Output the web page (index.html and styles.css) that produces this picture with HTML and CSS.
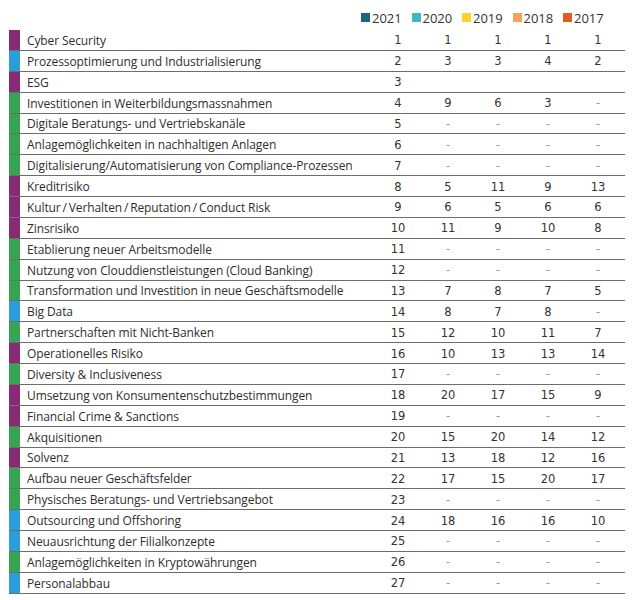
FILE: index.html
```html
<!DOCTYPE html>
<html lang="de">
<head>
<meta charset="utf-8">
<link rel="stylesheet" href="styles.css">
</head>
<body>
<div class="page">
  <div class="legend">
    <span class="key"><i class="sw c2021"></i>2021</span>
    <span class="key"><i class="sw c2020"></i>2020</span>
    <span class="key"><i class="sw c2019"></i>2019</span>
    <span class="key"><i class="sw c2018"></i>2018</span>
    <span class="key"><i class="sw c2017"></i>2017</span>
  </div>
  <div class="table">
    <div class="row p"><i class="bar"></i><span class="label">Cyber Security</span><span class="n">1</span><span class="n">1</span><span class="n">1</span><span class="n">1</span><span class="n">1</span></div>
    <div class="row b"><i class="bar"></i><span class="label">Prozessoptimierung und Industrialisierung</span><span class="n">2</span><span class="n">3</span><span class="n">3</span><span class="n">4</span><span class="n">2</span></div>
    <div class="row p"><i class="bar"></i><span class="label">ESG</span><span class="n">3</span><span class="n"></span><span class="n"></span><span class="n"></span><span class="n"></span></div>
    <div class="row g"><i class="bar"></i><span class="label">Investitionen in Weiterbildungsmassnahmen</span><span class="n">4</span><span class="n">9</span><span class="n">6</span><span class="n">3</span><span class="n d">-</span></div>
    <div class="row g"><i class="bar"></i><span class="label">Digitale Beratungs- und Vertriebskanäle</span><span class="n">5</span><span class="n d">-</span><span class="n d">-</span><span class="n d">-</span><span class="n d">-</span></div>
    <div class="row g"><i class="bar"></i><span class="label">Anlagemöglichkeiten in nachhaltigen Anlagen</span><span class="n">6</span><span class="n d">-</span><span class="n d">-</span><span class="n d">-</span><span class="n d">-</span></div>
    <div class="row g"><i class="bar"></i><span class="label">Digitalisierung/Automatisierung von Compliance-Prozessen</span><span class="n">7</span><span class="n d">-</span><span class="n d">-</span><span class="n d">-</span><span class="n d">-</span></div>
    <div class="row p"><i class="bar"></i><span class="label">Kreditrisiko</span><span class="n">8</span><span class="n">5</span><span class="n">11</span><span class="n">9</span><span class="n">13</span></div>
    <div class="row p"><i class="bar"></i><span class="label">Kultur&#8201;/&#8201;Verhalten&#8201;/&#8201;Reputation&#8201;/&#8201;Conduct Risk</span><span class="n">9</span><span class="n">6</span><span class="n">5</span><span class="n">6</span><span class="n">6</span></div>
    <div class="row p"><i class="bar"></i><span class="label">Zinsrisiko</span><span class="n">10</span><span class="n">11</span><span class="n">9</span><span class="n">10</span><span class="n">8</span></div>
    <div class="row g"><i class="bar"></i><span class="label">Etablierung neuer Arbeitsmodelle</span><span class="n">11</span><span class="n d">-</span><span class="n d">-</span><span class="n d">-</span><span class="n d">-</span></div>
    <div class="row g"><i class="bar"></i><span class="label">Nutzung von Clouddienstleistungen (Cloud Banking)</span><span class="n">12</span><span class="n d">-</span><span class="n d">-</span><span class="n d">-</span><span class="n d">-</span></div>
    <div class="row g"><i class="bar"></i><span class="label">Transformation und Investition in neue Geschäftsmodelle</span><span class="n">13</span><span class="n">7</span><span class="n">8</span><span class="n">7</span><span class="n">5</span></div>
    <div class="row b"><i class="bar"></i><span class="label">Big Data</span><span class="n">14</span><span class="n">8</span><span class="n">7</span><span class="n">8</span><span class="n d">-</span></div>
    <div class="row g"><i class="bar"></i><span class="label">Partnerschaften mit Nicht-Banken</span><span class="n">15</span><span class="n">12</span><span class="n">10</span><span class="n">11</span><span class="n">7</span></div>
    <div class="row p"><i class="bar"></i><span class="label">Operationelles Risiko</span><span class="n">16</span><span class="n">10</span><span class="n">13</span><span class="n">13</span><span class="n">14</span></div>
    <div class="row g"><i class="bar"></i><span class="label">Diversity &amp; Inclusiveness</span><span class="n">17</span><span class="n d">-</span><span class="n d">-</span><span class="n d">-</span><span class="n d">-</span></div>
    <div class="row p"><i class="bar"></i><span class="label">Umsetzung von Konsumentenschutzbestimmungen</span><span class="n">18</span><span class="n">20</span><span class="n">17</span><span class="n">15</span><span class="n">9</span></div>
    <div class="row p"><i class="bar"></i><span class="label">Financial Crime &amp; Sanctions</span><span class="n">19</span><span class="n d">-</span><span class="n d">-</span><span class="n d">-</span><span class="n d">-</span></div>
    <div class="row g"><i class="bar"></i><span class="label">Akquisitionen</span><span class="n">20</span><span class="n">15</span><span class="n">20</span><span class="n">14</span><span class="n">12</span></div>
    <div class="row p"><i class="bar"></i><span class="label">Solvenz</span><span class="n">21</span><span class="n">13</span><span class="n">18</span><span class="n">12</span><span class="n">16</span></div>
    <div class="row g"><i class="bar"></i><span class="label">Aufbau neuer Geschäftsfelder</span><span class="n">22</span><span class="n">17</span><span class="n">15</span><span class="n">20</span><span class="n">17</span></div>
    <div class="row g"><i class="bar"></i><span class="label">Physisches Beratungs- und Vertriebsangebot</span><span class="n">23</span><span class="n d">-</span><span class="n d">-</span><span class="n d">-</span><span class="n d">-</span></div>
    <div class="row b"><i class="bar"></i><span class="label">Outsourcing und Offshoring</span><span class="n">24</span><span class="n">18</span><span class="n">16</span><span class="n">16</span><span class="n">10</span></div>
    <div class="row b"><i class="bar"></i><span class="label">Neuausrichtung der Filialkonzepte</span><span class="n">25</span><span class="n d">-</span><span class="n d">-</span><span class="n d">-</span><span class="n d">-</span></div>
    <div class="row g"><i class="bar"></i><span class="label">Anlagemöglichkeiten in Kryptowährungen</span><span class="n">26</span><span class="n d">-</span><span class="n d">-</span><span class="n d">-</span><span class="n d">-</span></div>
    <div class="row b"><i class="bar"></i><span class="label">Personalabbau</span><span class="n">27</span><span class="n d">-</span><span class="n d">-</span><span class="n d">-</span><span class="n d">-</span></div>
  </div>
</div>
</body>
</html>
```

FILE: styles.css
```css
* { box-sizing: border-box; }
html, body { margin: 0; padding: 0; background: #fff; }
body {
  font-family: "Open Sans", "DejaVu Sans", sans-serif;
  color: #2e2e2e;
}
.page {
  width: 632px;
  padding-left: 9px;
}
.legend {
  height: 30px;
  display: flex;
  justify-content: flex-start;
  padding-left: 352px;
  padding-top: 5px;
  font-size: 13px;
  line-height: 18px;
  color: #333;
}
.key {
  display: flex;
  align-items: center;
  width: 50.5px;
}
.sw {
  display: inline-block;
  width: 9px;
  height: 9px;
  margin-right: 2px;
}
.c2021 { background: #176878; }
.c2020 { background: #40b8c4; }
.c2019 { background: #fdd22c; }
.c2018 { background: #f5a25d; }
.c2017 { background: #e35b24; }

.table {
  width: 616px;
}
.row {
  display: grid;
  grid-template-columns: 11px 1fr repeat(5, 50px);
  padding-right: 2px;
  height: 20.89px;
  border-bottom: 1px solid #6d6d6d;
  align-items: center;
  font-size: 12px;
}
.bar {
  align-self: stretch;
  display: block;
}
.row.p .bar { background: #862b74; }
.row.b .bar { background: #2c9ddb; }
.row.g .bar { background: #36a553; }
.label {
  padding-left: 7px;
  padding-top: 1px;
  white-space: nowrap;
  color: #2e2e2e;
  letter-spacing: -0.1px;
}
.n {
  text-align: center;
  padding-top: 1px;
  font-family: "DejaVu Sans", sans-serif;
  font-size: 11.5px;
  color: #333;
}
.n.d { color: #999; }
```
